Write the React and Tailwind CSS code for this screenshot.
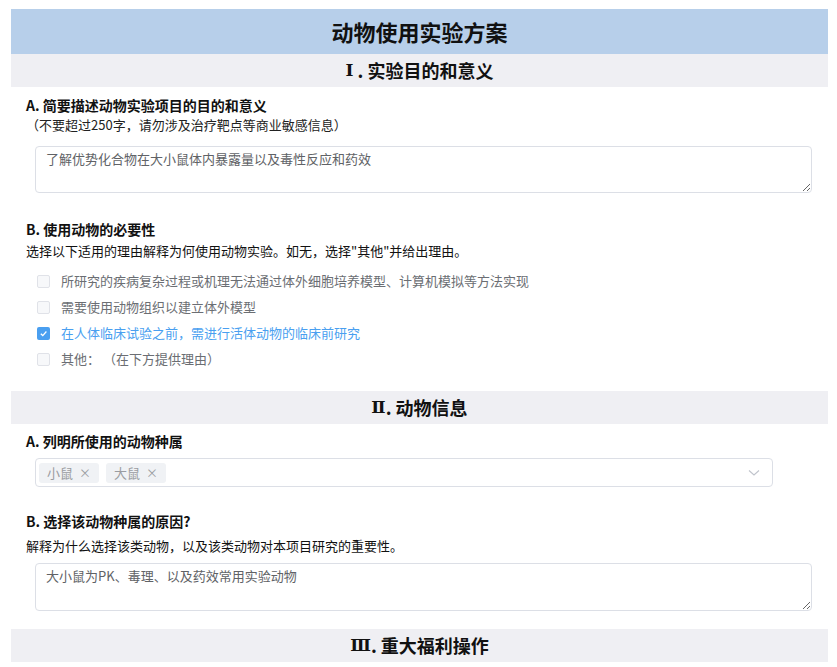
import React from "react";

const FONT = { fontFamily: '"Noto Sans CJK SC", "Noto Sans", sans-serif' };

function Roman({ children }) {
  return (
    <span style={{ fontFamily: '"DejaVu Serif", "Liberation Serif", serif' }} className="text-[17px]">
      {children}
    </span>
  );
}

function SectionHeader({ numeral, title, className = "" }) {
  return (
    <div className={`h-[33px] bg-[#efeff3] flex items-center justify-center text-[18px] font-bold text-[#111] ${className}`}>
      <Roman>{numeral}</Roman>
      <span className="whitespace-pre">{title}</span>
    </div>
  );
}

function Box({ checked, label }) {
  return (
    <div className="h-[26px] flex items-center pl-[11px]">
      {checked ? (
        <div className="w-[13px] h-[13px] rounded-[2px] bg-[#4a9ff0] flex items-center justify-center">
          <svg width="9" height="9" viewBox="0 0 10 10">
            <path d="M2 5.2 L4.2 7.3 L8.2 2.8" stroke="#fff" strokeWidth="1.4" fill="none" />
          </svg>
        </div>
      ) : (
        <div className="w-[13px] h-[13px] rounded-[2px] border border-[#e0e2e8] bg-[#f7f8fa]" />
      )}
      <span className={`ml-[11px] text-[13px] leading-[20px] whitespace-pre ${checked ? "text-[#4a9ff0]" : "text-[#6b6e73]"}`}>{label}</span>
    </div>
  );
}

function Tag({ label }) {
  return (
    <div className="h-[20px] px-[8px] rounded-[3px] bg-[#f0f2f5] flex items-center text-[13px] text-[#9a9ca1] gap-[6px]">
      <span>{label}</span>
      <span className="text-[12px]">×</span>
    </div>
  );
}

function Area({ value, className = "" }) {
  return (
    <textarea
      readOnly
      value={value}
      className={`block ml-[9px] w-[777px] border border-[#dcdfe6] rounded-[4px] px-[10px] py-[2px] text-[13px] leading-[20px] text-[#606266] bg-white outline-none ${className}`}
      style={FONT}
    />
  );
}

export default function App() {
  return (
    <div className="bg-white min-h-[667px] pt-[9px]" style={FONT}>
      <div className="ml-[11px] w-[817px]">
        <div className="h-[45px] bg-[#b7cfea] flex items-center justify-center text-[22px] font-bold text-[#111]">
          动物使用实验方案
        </div>
        <SectionHeader numeral="Ⅰ" title=" . 实验目的和意义" />
        <div className="pl-[15px]">
          <div className="mt-[8px] text-[14px] leading-[20px] font-bold text-[#111]">A. 简要描述动物实验项目的目的和意义</div>
          <div className="text-[13px] leading-[20px] text-[#222]">（不要超过250字，请勿涉及治疗靶点等商业敏感信息）</div>
          <Area value="了解优势化合物在大小鼠体内暴露量以及毒性反应和药效" className="mt-[11px] h-[47px]" />
          <div className="mt-[26px] text-[14px] leading-[20px] font-bold text-[#111]">B. 使用动物的必要性</div>
          <div className="mt-[2px] text-[13px] leading-[20px] text-[#111]">选择以下适用的理由解释为何使用动物实验。如无，选择"其他"并给出理由。</div>
          <div className="mt-[7px]">
            <Box label="所研究的疾病复杂过程或机理无法通过体外细胞培养模型、计算机模拟等方法实现" />
            <Box label="需要使用动物组织以建立体外模型" />
            <Box checked label="在人体临床试验之前，需进行活体动物的临床前研究" />
            <Box label="其他： （在下方提供理由）" />
          </div>
        </div>
        <SectionHeader numeral="Ⅱ" title=". 动物信息" className="mt-[19px]" />
        <div className="pl-[15px]">
          <div className="mt-[7px] text-[14px] leading-[20px] font-bold text-[#111]">A. 列明所使用的动物种属</div>
          <div className="mt-[7px] ml-[9px] w-[738px] h-[29px] border border-[#dcdfe6] rounded-[4px] bg-white flex items-center pl-[3px] pr-[12px]">
            <div className="flex gap-[7px]">
              <Tag label="小鼠" />
              <Tag label="大鼠" />
            </div>
            <div className="flex-1" />
            <svg width="12" height="8" viewBox="0 0 12 8">
              <path d="M1 1.5 L6 6 L11 1.5" stroke="#c0c4cc" strokeWidth="1.1" fill="none" />
            </svg>
          </div>
          <div className="mt-[24px] text-[14px] leading-[20px] font-bold text-[#111]">B. 选择该动物种属的原因?</div>
          <div className="mt-[5px] text-[13px] leading-[20px] text-[#111]">解释为什么选择该类动物，以及该类动物对本项目研究的重要性。</div>
          <Area value="大小鼠为PK、毒理、以及药效常用实验动物" className="mt-[7px] h-[48px]" />
        </div>
        <SectionHeader numeral="Ⅲ" title=". 重大福利操作" className="mt-[18px]" />
      </div>
    </div>
  );
}
